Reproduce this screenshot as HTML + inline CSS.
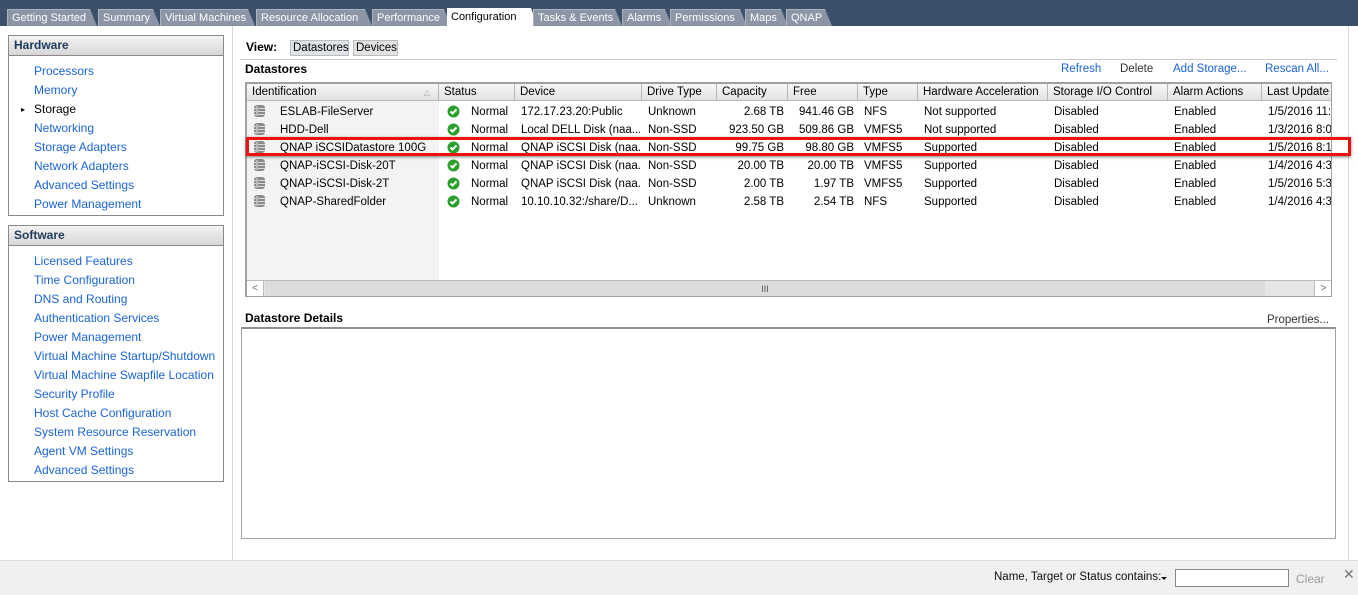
<!DOCTYPE html>
<html><head><style>
*{margin:0;padding:0;box-sizing:border-box}
body{width:1358px;height:595px;position:relative;background:#fff;font-family:"Liberation Sans",Tahoma,sans-serif;font-size:12px;color:#000;overflow:hidden}
.abs{position:absolute;white-space:nowrap}
#top{left:0;top:0;width:1358px;height:26px;background:#3c5169}
.tab{position:absolute;top:9px;height:17px;background:#8b95a6;color:#fff;font-size:11px;line-height:17px;padding-left:4px;border-top:1px solid #aab2bf;border-left:1px solid #aab2bf;white-space:nowrap;overflow:visible}
.tab:after{content:"";position:absolute;right:-7px;top:-1px;border-left:7px solid #8b95a6;border-top:17px solid transparent;}
.tab.act{background:#fff;color:#000;top:8px;height:19px;border:none;line-height:19px}
.tab.act:after{border-left-color:#fff;border-top-width:19px;top:0}
.box{position:absolute;left:8px;width:216px;border:1px solid #8a8a8a}
.box .h{height:20px;background:linear-gradient(#f4f4f4,#d6d6d6);border-bottom:1px solid #8a8a8a;font-weight:bold;color:#1f3a5a;padding-left:5px;line-height:19px}
.box a{display:block;color:#1a64d6;text-decoration:none;padding-left:25px;height:19px;line-height:19px;white-space:nowrap}
.th{position:absolute;top:0;height:17px;line-height:17px;border-right:1px solid #b8b8b8;background:linear-gradient(#f7f7f7,#e2e2e2);padding-left:5px;border-bottom:1px solid #bbb;white-space:nowrap;overflow:hidden}
.cell{position:absolute;white-space:nowrap;overflow:hidden}
.lnk{color:#1a64d6}
#tbl{font-size:11.5px}
</style></head><body>
<div id="top" class="abs"></div>
<div class="tab" style="left:7px;width:83px">Getting Started</div>
<div class="tab" style="left:98px;width:55px">Summary</div>
<div class="tab" style="left:160px;width:88px">Virtual Machines</div>
<div class="tab" style="left:256px;width:109px">Resource Allocation</div>
<div class="tab" style="left:372px;width:72px">Performance</div>
<div class="tab act" style="left:447px;width:84px">Configuration</div>
<div class="tab" style="left:533px;width:82px">Tasks &amp; Events</div>
<div class="tab" style="left:622px;width:43px">Alarms</div>
<div class="tab" style="left:670px;width:70px">Permissions</div>
<div class="tab" style="left:745px;width:36px">Maps</div>
<div class="tab" style="left:786px;width:39px">QNAP</div>

<div class="abs" style="left:232px;top:26px;width:1px;height:534px;background:#d8d8d8"></div>
<div class="abs" style="left:1348px;top:26px;width:1px;height:534px;background:#d8d8d8"></div>

<div class="box" style="top:35px;height:181px">
<div class="h">Hardware</div>
<div style="height:6px"></div>
<a>Processors</a><a>Memory</a>
<a style="color:#000;position:relative"><span style="position:absolute;left:12px;font-size:8px">▸</span>Storage</a>
<a>Networking</a><a>Storage Adapters</a><a>Network Adapters</a><a>Advanced Settings</a><a>Power Management</a>
</div>
<div class="box" style="top:225px;height:257px">
<div class="h">Software</div>
<div style="height:6px"></div>
<a>Licensed Features</a><a>Time Configuration</a><a>DNS and Routing</a><a>Authentication Services</a><a>Power Management</a><a>Virtual Machine Startup/Shutdown</a><a>Virtual Machine Swapfile Location</a><a>Security Profile</a><a>Host Cache Configuration</a><a>System Resource Reservation</a><a>Agent VM Settings</a><a>Advanced Settings</a>
</div>

<div class="abs" style="left:246px;top:40px;font-weight:bold">View:</div>
<div class="abs" style="left:290px;top:40px;width:59px;height:16px;background:#dfe3e8;border:1px solid #b9bcc0;line-height:14px;padding-left:2px;font-size:11.5px">Datastores</div>
<div class="abs" style="left:353px;top:40px;width:45px;height:16px;background:#e2e2e2;border:1px solid #b9bcc0;line-height:14px;padding-left:2px;font-size:11.5px">Devices</div>
<div class="abs" style="left:240px;top:59px;width:1097px;height:1px;background:#c8c8c8"></div>
<div class="abs" style="left:245px;top:62px;font-weight:bold">Datastores</div>
<div class="abs lnk" style="left:1061px;top:63px;font-size:11.5px">Refresh</div>
<div class="abs" style="left:1120px;top:63px;color:#333;font-size:11.5px">Delete</div>
<div class="abs lnk" style="left:1173px;top:63px;font-size:11.5px">Add Storage...</div>
<div class="abs lnk" style="left:1265px;top:63px;font-size:11.5px">Rescan All...</div>

<div id="tbl" class="abs" style="left:245px;top:82px;width:1087px;height:215px;border:2px solid #a0a0a0;border-right-width:1px;border-bottom-width:1px;overflow:hidden">
 <div class="abs" style="left:0;top:17px;width:192px;height:180px;background:#f3f3f3"></div>
 <div class="th" style="left:0;width:192px">Identification<span style="position:absolute;right:8px;color:#aaa;font-size:8px">△</span></div>
 <div class="th" style="left:192px;width:76px">Status</div>
 <div class="th" style="left:268px;width:127px">Device</div>
 <div class="th" style="left:395px;width:75px">Drive Type</div>
 <div class="th" style="left:470px;width:71px">Capacity</div>
 <div class="th" style="left:541px;width:70px">Free</div>
 <div class="th" style="left:611px;width:60px">Type</div>
 <div class="th" style="left:671px;width:130px">Hardware Acceleration</div>
 <div class="th" style="left:801px;width:120px">Storage I/O Control</div>
 <div class="th" style="left:921px;width:94px">Alarm Actions</div>
 <div class="th" style="left:1015px;width:80px">Last Update</div>
 <div class="abs" id="rows" style="left:0;top:18px;width:1090px"></div>
 <div class="abs" style="left:0;top:196px;width:1086px;height:17px;background:#e6e6e6;border-top:1px solid #bbb">
  <div class="abs" style="left:0;top:0;width:17px;height:16px;background:#fff;border-right:1px solid #bbb;color:#666;font-size:10px;text-align:center;line-height:16px">&lt;</div>
  <div class="abs" style="left:18px;top:0;width:1000px;height:16px;background:#dcdcdc;text-align:center;font-size:9px;color:#555;line-height:16px">III</div>
  <div class="abs" style="left:1067px;top:0;width:18px;height:16px;background:#fff;border-left:1px solid #bbb;color:#666;font-size:10px;text-align:center;line-height:16px">&gt;</div>
 </div>
</div>
<div class="abs" style="left:246px;top:137px;width:1105px;height:19px;border:3px solid #ee1111;box-shadow:0 1px 3px rgba(0,0,0,.5)"></div>

<div class="abs" style="left:245px;top:311px;font-weight:bold">Datastore Details</div>
<div class="abs" style="left:1267px;top:314px;color:#333;font-size:11.5px">Properties...</div>
<div class="abs" style="left:241px;top:327px;width:1095px;height:212px;border:1px solid #a0a0a0;border-top:2px solid #909090"></div>

<div class="abs" style="left:0;top:560px;width:1358px;height:35px;background:#f0f0f0;border-top:1px solid #ddd"></div>
<div class="abs" style="left:994px;top:571px;color:#111;font-size:11.5px">Name, Target or Status contains:</div>
<div class="abs" style="left:1161px;top:577px;width:0;height:0;border-left:3px solid transparent;border-right:3px solid transparent;border-top:3px solid #111"></div>
<div class="abs" style="left:1175px;top:569px;width:114px;height:18px;background:#fff;border:1px solid #888"></div>
<div class="abs" style="left:1296px;top:572px;color:#999">Clear</div>
<div class="abs" style="left:1343px;top:566px;color:#777;font-size:14px">✕</div>

<script>
var d=[["ESLAB-FileServer","172.17.23.20:Public","Unknown","2.68 TB","941.46 GB","NFS","Not supported","1/5/2016 11:"],
["HDD-Dell","Local DELL Disk (naa....","Non-SSD","923.50 GB","509.86 GB","VMFS5","Not supported","1/3/2016 8:0"],
["QNAP iSCSIDatastore 100G","QNAP iSCSI Disk (naa...","Non-SSD","99.75 GB","98.80 GB","VMFS5","Supported","1/5/2016 8:1"],
["QNAP-iSCSI-Disk-20T","QNAP iSCSI Disk (naa...","Non-SSD","20.00 TB","20.00 TB","VMFS5","Supported","1/4/2016 4:3"],
["QNAP-iSCSI-Disk-2T","QNAP iSCSI Disk (naa...","Non-SSD","2.00 TB","1.97 TB","VMFS5","Supported","1/5/2016 5:3"],
["QNAP-SharedFolder","10.10.10.32:/share/D...","Unknown","2.58 TB","2.54 TB","NFS","Supported","1/4/2016 4:3"]];
var h="";
var db='<svg class="cell" style="left:6px;top:2px" width="13" height="14" viewBox="0 0 13 14"><rect x="1" y="1" width="11" height="12" rx="3" fill="#8a8a8a"/><path d="M1 4.5h11M1 7.5h11M1 10.5h11" stroke="#d8d8d8"/><rect x="3" y="2" width="2" height="10" fill="#b8b8b8"/></svg>';
var ok='<svg class="cell" style="left:200px;top:3px" width="13" height="13" viewBox="0 0 13 13"><circle cx="6.5" cy="6.5" r="6" fill="#2ca02c"/><path d="M3.5 6.5l2 2 4-4" stroke="#fff" stroke-width="2" fill="none"/></svg>';
d.forEach(function(r,i){var t=i*18;
h+='<div class="abs" style="left:0;top:'+t+'px;width:1090px;height:18px;line-height:20px">'+db+ok+
'<div class="cell" style="left:33px;width:155px">'+r[0]+'</div><div class="cell" style="left:224px">Normal</div>'+
'<div class="cell" style="left:274px;width:119px">'+r[1]+'</div><div class="cell" style="left:401px">'+r[2]+'</div>'+
'<div class="cell" style="left:470px;width:67px;text-align:right">'+r[3]+'</div><div class="cell" style="left:541px;width:66px;text-align:right">'+r[4]+'</div>'+
'<div class="cell" style="left:617px">'+r[5]+'</div><div class="cell" style="left:677px">'+r[6]+'</div>'+
'<div class="cell" style="left:807px">Disabled</div><div class="cell" style="left:927px">Enabled</div><div class="cell" style="left:1021px;width:63px">'+r[7]+'</div></div>';});
document.getElementById("rows").innerHTML=h;
</script>
</body></html>
